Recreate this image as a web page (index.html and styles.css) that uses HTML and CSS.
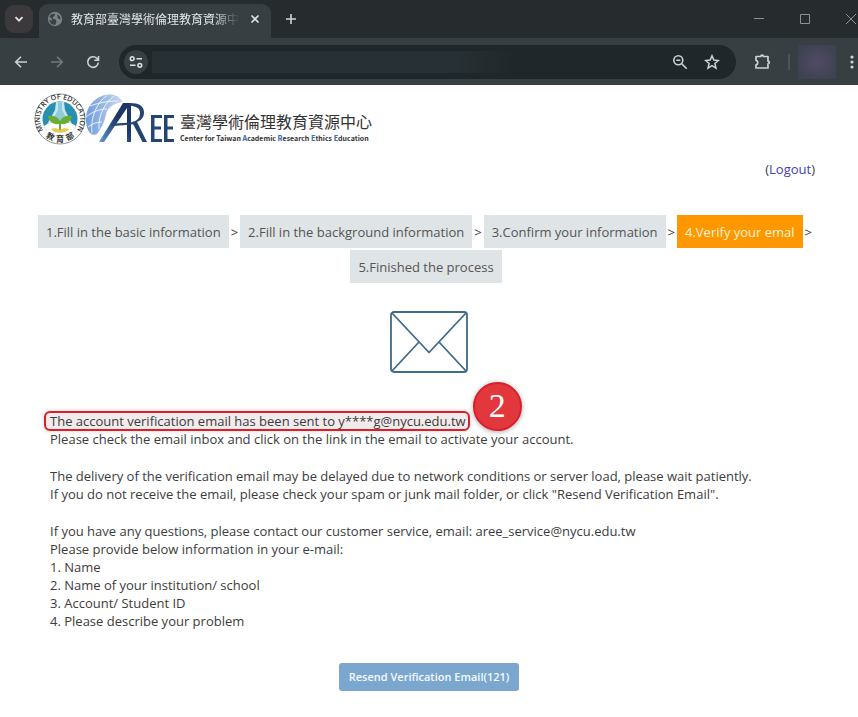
FILE: index.html
```html
<!DOCTYPE html>
<html lang="en">
<head>
<meta charset="utf-8">
<title>AREE - Verify your email</title>
<link rel="stylesheet" href="styles.css">
</head>
<body>
<header class="browser">
  <div class="tabstrip">
    <button class="tab-search" aria-label="Search tabs"><svg width="12" height="12" viewBox="0 0 12 12"><path d="M2.500 4.200 6 7.700l3.500-3.500" fill="none" stroke="#dfe2e3" stroke-width="1.800"/></svg></button>
    <div class="tab">
      <svg width="16" height="16" viewBox="0 0 16 16"><circle cx="8" cy="8" r="7.200" fill="#7b8285"/><path d="M2.300 5.500C4 3 6 2.500 8 2.700L7.500 5 5.800 6.200 6 8l2.500.3 1 2-1 3.500C5 14 2.500 12 2.200 8.500l2.300 1.500.5-2zM10 3.300l3 2.200.6 3-2.600-1z" fill="#394144"/></svg>
      <span class="tab-title" lang="zh-Hant">教育部臺灣學術倫理教育資源中</span>
      <button class="plain" aria-label="Close tab"><svg width="16" height="16" viewBox="0 0 16 16"><path d="m4.500 4.500 7 7m0-7-7 7" stroke="#dfe2e3" stroke-width="1.700"/></svg></button>
    </div>
    <button class="plain new-tab" aria-label="New tab"><svg width="16" height="16" viewBox="0 0 16 16"><path d="M8 3v10M3 8h10" stroke="#d0d4d5" stroke-width="1.600"/></svg></button>
    <div class="window-controls">
      <button class="plain" aria-label="Minimize"><svg width="12" height="12" viewBox="0 0 12 12"><path d="M1 5.500h10" stroke="#8c9193"/></svg></button>
      <button class="plain" aria-label="Maximize"><svg width="12" height="12" viewBox="0 0 12 12"><path d="M1.500 1.500h9v9h-9z" fill="none" stroke="#8c9193"/></svg></button>
      <button class="plain" aria-label="Close"><svg width="12" height="12" viewBox="0 0 12 12"><path d="m1 1 10 10m0-10L1 11" stroke="#8c9193"/></svg></button>
    </div>
  </div>
  <div class="toolbar">
    <button class="plain" aria-label="Back"><svg width="16" height="16" viewBox="0 0 16 16"><path d="M14 8H3m5-5.300L2.700 8 8 13.300" fill="none" stroke="#cdd2d4" stroke-width="1.600"/></svg></button>
    <button class="plain" aria-label="Forward"><svg width="16" height="16" viewBox="0 0 16 16"><path d="M2 8h11M8 2.700 13.300 8 8 13.300" fill="none" stroke="#737a7d" stroke-width="1.600"/></svg></button>
    <button class="plain" aria-label="Reload"><svg width="16" height="16" viewBox="0 0 16 16"><path d="M13.300 8.500A5.300 5.300 0 1 1 11.800 4.300L13.300 6M13.500 2v4.300H9.300" fill="none" stroke="#cdd2d4" stroke-width="1.600"/></svg></button>
    <div class="address">
      <button class="site-info" aria-label="Site information"><svg width="14" height="14" viewBox="0 0 14 14"><g fill="none" stroke="#dfe2e3" stroke-width="1.500"><circle cx="3.200" cy="3.700" r="1.900"/><path d="M7.500 3.700H13M1 10.300h5.500"/><circle cx="10.800" cy="10.300" r="1.900"/></g></svg></button>
      <input class="url" type="text" aria-label="Address">
      <button class="plain" aria-label="Zoom"><svg width="16" height="16" viewBox="0 0 16 16"><g fill="none" stroke="#cdd2d4" stroke-width="1.600"><circle cx="6.300" cy="6.300" r="4.500"/><path d="m9.700 9.700 5 5M4.300 6.300h4"/></g></svg></button>
      <button class="plain" aria-label="Bookmark"><svg width="16" height="16" viewBox="0 0 16 16"><path d="m8 1.800 1.800 4.300 4.600.4-3.500 3 1.100 4.600L8 11.700l-4 2.400 1.100-4.600-3.500-3 4.600-.4z" fill="none" stroke="#cdd2d4" stroke-width="1.500"/></svg></button>
    </div>
    <button class="plain extensions" aria-label="Extensions"><svg width="18" height="18" viewBox="0 0 18 18"><path d="M2 3.500h4.800a1.300 1.300 0 0 1 2.600 0H14v4.700a1.300 1.300 0 0 1 0 2.600V15H2v-3.200a2.300 2.300 0 0 0 0-4.500z" fill="none" stroke="#cdd2d4" stroke-width="1.700" stroke-linejoin="round"/></svg></button>
    <span class="divider"></span>
    <button class="profile" aria-label="Profile"></button>
    <button class="plain" aria-label="Menu"><svg width="6" height="16" viewBox="0 0 6 16" fill="#cdd2d4"><circle cx="3" cy="3" r="1.600"/><circle cx="3" cy="8" r="1.600"/><circle cx="3" cy="13" r="1.600"/></svg></button>
  </div>
</header>

<main class="page">
  <div class="brand">
    <svg class="seal" width="52" height="52" viewBox="0 0 52 52">
      <defs><path id="ring" d="M9.500 37.500A20 20 0 1 1 42.500 37.500"/></defs>
      <circle cx="26" cy="26" r="25" fill="#fff" stroke="#8b979b"/>
      <circle cx="26" cy="26" r="17.500" fill="#278fb1"/>
      <path d="M22 9h8l1 8 9 18-5 5-9-16-9 16-6-5 10-18z" fill="#c8e6ec"/>
      <path d="M24 9h4v8l8 15H16l8-15z" fill="#8fcbd8"/>
      <path d="M10 33c6-4 11-4 16-1 5-3 10-3 16 1-3 7-9 10.500-16 10.500S13 40 10 33z" fill="#fff"/>
      <path d="M25 38v-7c-6 1-10-3-11-8 6-1 10 1 12 5 2-4 6-6 12-5-1 5-5 9-11 8v7z" fill="#69ad35"/>
      <path d="M17 36c3-1 6-1 9 1 3-2 6-2 9-1-3 5-15 5-18 0z" fill="#e9c74e"/>
      <text class="seal-text"><textPath href="#ring" startOffset="50%" text-anchor="middle">MINISTRY OF EDUCATION</textPath></text>
      <g class="seal-cjk" text-anchor="middle"><text transform="translate(15 46) rotate(26)">教</text><text x="26" y="49">育</text><text transform="translate(37 46) rotate(-26)">部</text></g>
    </svg>
    <svg class="aree" width="92" height="52" viewBox="0 0 92 52">
      <defs>
        <linearGradient id="globe" x1="0" y1="0" x2="1" y2="0"><stop offset="0" stop-color="#6f9bdc"/><stop offset="1" stop-color="#c9daf3"/></linearGradient>
        <linearGradient id="leg" x1="0" y1="1" x2="1" y2="0"><stop offset="0" stop-color="#5f97d6"/><stop offset=".6" stop-color="#1c3764"/></linearGradient>
      </defs>
      <path d="M2 37C-4 21 4 7 17 2.500c8-2.500 16-.5 20 6.500-9 1-15 5-17 12-1 6-3 12-9 20-4 2-7 0-9-4z" fill="url(#globe)"/>
      <path d="M6 40C4 25 11 9 21 2.500M13 36C12 22 19 10 28 3M0 24c6-5 13-8 21-8M4 13c8-3 17-5 28-5M2 34c4-3 8-5 14-5" fill="none" stroke="#fff" stroke-width=".8"/>
      <path d="M13 49 37 10h8v39h-4V15L18 49z" fill="url(#leg)"/>
      <path d="M25 32c8-1 18-1 24-2" fill="none" stroke="#234574" stroke-width="2.200"/>
      <path d="M44 10c9 0 14 3 14 9.500 0 5-3 8-7 9.500l10 20h-4.500L46 29c5-1 8-4 8-9s-4-7-10-7z" fill="#234574"/>
      <path d="M65 22h11v3h-7.500v8.500H75v3h-6.500V46H76v3H65zM78 22h10v3h-6.500v8.500H87v3h-5.500V46H88v3H78z" fill="#234574"/>
    </svg>
    <div class="brand-name">
      <span class="brand-zh" lang="zh-Hant">臺灣學術倫理教育資源中心</span>
      <span class="brand-en">Center for Taiwan <b>A</b>cademic <b>R</b>esearch <b>E</b>thics <b>E</b>ducation</span>
    </div>
  </div>

  <p class="account">(<a href="#">Logout</a>)</p>

  <ol class="steps">
    <li><span class="step">1.Fill in the basic information</span></li>
    <li class="sep">&gt;</li>
    <li><span class="step">2.Fill in the background information</span></li>
    <li class="sep">&gt;</li>
    <li><span class="step">3.Confirm your information</span></li>
    <li class="sep">&gt;</li>
    <li><span class="step current">4.Verify your emal</span></li>
    <li class="sep">&gt;</li>
    <li><span class="step">5.Finished the process</span></li>
  </ol>

  <svg class="envelope" width="78" height="62" viewBox="0 0 78 62"><g fill="none" stroke="#3f6b8c" stroke-width="1.800" stroke-linejoin="round"><rect x="1" y="1" width="76" height="60" rx="3"/><path d="M2 2 39 41.500 76 2M2 60l27-29M76 60 49 31"/></g></svg>

  <section class="message">
    <p><span class="highlight">The account verification email has been sent to y****g@nycu.edu.tw<span class="marker">2</span></span><br>
    Please check the email inbox and click on the link in the email to activate your account.</p>
    <p>The delivery of the verification email may be delayed due to network conditions or server load, please wait patiently.<br>
    If you do not receive the email, please check your spam or junk mail folder, or click "Resend Verification Email".</p>
    <p>If you have any questions, please contact our customer service, email: aree_service@nycu.edu.tw<br>
    Please provide below information in your e-mail:<br>
    1. Name<br>
    2. Name of your institution/ school<br>
    3. Account/ Student ID<br>
    4. Please describe your problem</p>
  </section>

  <button class="resend">Resend Verification Email(121)</button>
</main>
</body>
</html>
```
FILE: styles.css
```css
* { box-sizing: border-box; }

body {
  margin: 0;
  background: #fff;
  color: #3c3c3c;
  font: 13px/18px "Open Sans", "Noto Sans CJK TC", sans-serif;
}

button { border: 0; padding: 0; font: inherit; }
svg { display: block; flex: none; }
.plain { background: none; }

/* Browser frame */
.browser { background: #373f42; }

.tabstrip {
  display: flex;
  align-items: center;
  height: 38px;
  padding: 0 1px 0 5px;
  background: #262c2e;
}

.tab-search {
  display: grid;
  place-items: center;
  width: 28px;
  height: 28px;
  border-radius: 9px;
  background: #3c393c;
}

.tab {
  display: flex;
  align-items: center;
  gap: 8px;
  align-self: flex-end;
  width: 232px;
  height: 34px;
  margin-left: 6px;
  padding: 0 8px 4px;
  border-radius: 9px 9px 0 0;
  background: #373f42;
}

.tab-title {
  flex: 1;
  overflow: hidden;
  white-space: nowrap;
  color: #e3e6e7;
  font: 12px/18px "Noto Sans CJK TC", sans-serif;
  mask-image: linear-gradient(to right, #000 85%, transparent);
}

.new-tab { margin-left: 12px; }

.window-controls {
  display: flex;
  gap: 34px;
  margin-left: auto;
}

.toolbar {
  display: flex;
  align-items: center;
  gap: 20px;
  height: 47px;
  padding: 0 3px 0 13px;
}

.address {
  display: flex;
  flex: 1;
  align-items: center;
  gap: 16px;
  height: 34px;
  margin-left: -2px;
  padding: 0 16px 0 5px;
  border-radius: 17px;
  background: #20272a;
}

.site-info {
  display: grid;
  place-items: center;
  width: 24px;
  height: 24px;
  border-radius: 12px;
  background: #373f42;
}

.url {
  flex: 1;
  min-width: 0;
  height: 22px;
  margin-left: -12px;
  border: 0;
  background: linear-gradient(to right, #273034, #273034 60%, #20272a 72%);
  color: #dfe2e3;
}

.extensions { margin-left: -2px; }

.divider {
  width: 2px;
  height: 16px;
  margin-left: -4px;
  background: #4c5457;
}

.profile {
  width: 38px;
  height: 34px;
  margin: 0 -7px 0 -12px;
  background: radial-gradient(#514b67, #3f4351 75%);
}

/* Page */
.page {
  display: flex;
  flex-direction: column;
  padding: 8px 34px 26px;
}

.brand { display: flex; }

.seal-text { fill: #333; font: 600 7px "Open Sans", sans-serif; }
.seal-cjk { fill: #333; font: bold 8px "Noto Sans CJK TC", sans-serif; }

.brand-name {
  display: flex;
  flex-direction: column;
  padding: 16px 0 0 2px;
  color: #333;
}

.brand-zh { font: 16px/24px "Noto Sans CJK TC", sans-serif; }
.brand-en { font: 700 7px/10px "Noto Sans CJK TC", sans-serif; }
.brand-en b { color: #4472b8; }

.account { margin: 15px 0 37px; padding-right: 9px; text-align: right; }
.account a { color: #4141b5; text-decoration: none; }

.steps {
  display: flex;
  flex-wrap: wrap;
  justify-content: center;
  align-items: center;
  gap: 2px 0;
  margin: 0;
  padding: 0 6px 0 0;
  list-style: none;
}

.step {
  display: block;
  padding: 8px 8px 7px;
  background: #dfe4e6;
  color: #555;
}

.current { background: #ff9800; color: #fff3cf; }
.sep { padding: 0 2px; }

.envelope { align-self: center; margin: 28px 0 39px; }

.message { padding-left: 16px; }
.message p { margin: 0 0 19px; }

.highlight { position: relative; }

.highlight::before {
  content: "";
  position: absolute;
  z-index: -1;
  inset: -1px -4px -1px -6px;
  border: 2px solid #d8202a;
  border-radius: 6px;
  background: #f1ebec;
  box-shadow: 0 0 4px #ccc;
}

.marker {
  position: absolute;
  right: -56px;
  bottom: -1px;
  width: 49px;
  height: 49px;
  border: 2px solid #d91f29;
  border-radius: 50%;
  background: #e2383d;
  box-shadow: 0 1px 5px #aaa;
  color: #fff;
  font: 34px/43px "Liberation Serif", serif;
  text-align: center;
}

.resend {
  align-self: center;
  margin-top: 14px;
  padding: 5px 10px;
  border-radius: 3px;
  background: #7ba7cf;
  color: #f4f9ff;
  font-size: 11px;
  font-weight: 600;
}
```
